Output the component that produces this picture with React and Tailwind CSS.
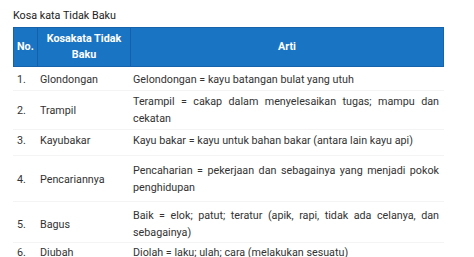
const rows = [
  { no: "1.", kata: "Glondongan", arti: "Gelondongan = kayu batangan bulat yang utuh", pad: "pt-[4px] pb-[2px]" },
  { no: "2.", kata: "Trampil", arti: "Terampil = cakap dalam menyelesaikan tugas; mampu dan cekatan", pad: "pt-[2px] pb-[2px]" },
  { no: "3.", kata: "Kayubakar", arti: "Kayu bakar = kayu untuk bahan bakar (antara lain kayu api)", pad: "pt-[2px] pb-[6px]" },
  { no: "4.", kata: "Pencariannya", arti: "Pencaharian =  pekerjaan dan sebagainya yang menjadi pokok penghidupan", pad: "pt-[6px] pb-[5px]" },
  { no: "5.", kata: "Bagus", arti: "Baik = elok; patut; teratur (apik, rapi, tidak ada celanya, dan sebagainya)", pad: "pt-[5px] pb-[1px]" },
  { no: "6.", kata: "Diubah", arti: "Diolah = laku; ulah; cara (melakukan sesuatu)", pad: "pt-[1px] pb-[2px]" },
];

export default function App() {
  return (
    <div className="w-[474px] h-[257px] overflow-hidden bg-white font-['Roboto',sans-serif] text-[#333] text-[10.75px]">
      <div className="pl-[13px] pt-[7px] h-[27px] text-[#222] leading-[17px]">Kosa kata Tidak Baku</div>
      <div className="ml-[13px] w-[431px]">
        {/* header */}
        <div className="flex h-[40px] bg-[#1a74c4] border border-[#1763ab] text-white font-bold leading-[16px]">
          <div className="w-[24px] flex items-center pl-[3px] border-r border-[#1560a8]">No.</div>
          <div className="w-[93px] flex items-center justify-center text-center border-r border-[#1560a8] px-[3px]">
            Kosakata Tidak Baku
          </div>
          <div className="flex-1 flex items-center justify-center">Arti</div>
        </div>
        {rows.map((r) => (
          <div key={r.no} className="flex border-b border-[#f4f4f4] leading-[17px]">
            <div className={"w-[24px] flex items-center pl-[4px] " + r.pad}>{r.no}</div>
            <div className={"w-[93px] flex items-center pl-[3px] " + r.pad}>{r.kata}</div>
            <div className={"flex-1 pl-[3px] pr-[5px] text-justify " + r.pad}>{r.arti}</div>
          </div>
        ))}
      </div>
    </div>
  );
}
